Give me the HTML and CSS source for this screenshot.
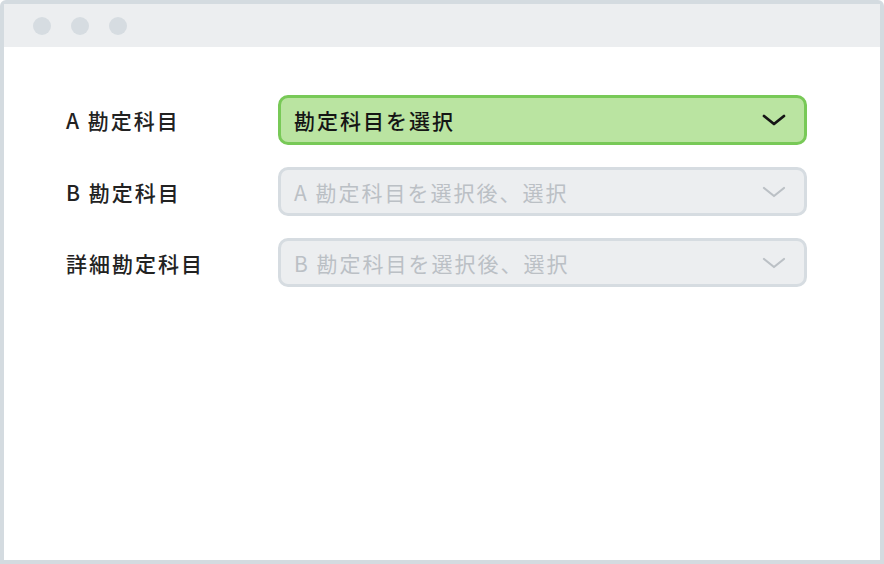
FILE: index.html
```html
<!DOCTYPE html>
<html lang="ja">
<head>
  <meta charset="UTF-8" />
  <meta name="viewport" content="width=device-width, initial-scale=1.0" />
  <title>勘定科目</title>
  <link rel="stylesheet" href="styles.css">
</head>
<body>
  <div class="window">
    <!-- タイトルバー -->
    <div class="titlebar">
      <span class="dot"></span>
      <span class="dot"></span>
      <span class="dot"></span>
    </div>

    <!-- フォーム -->
    <div class="content">
      <div class="row">
        <label class="label">A 勘定科目</label>
        <div class="select active">
          <span class="select-text">勘定科目を選択</span>
          <svg class="chevron" width="26" height="16" viewBox="0 0 26 16"><path d="M3 4 L13 12 L23 4" fill="none" stroke="currentColor" stroke-width="2.8" stroke-linecap="round" stroke-linejoin="round"/></svg>
        </div>
      </div>
      <div class="row">
        <label class="label">B 勘定科目</label>
        <div class="select disabled">
          <span class="select-text">A 勘定科目を選択後、選択</span>
          <svg class="chevron" width="26" height="16" viewBox="0 0 26 16"><path d="M3 4 L13 12 L23 4" fill="none" stroke="currentColor" stroke-width="2.2" stroke-linecap="round" stroke-linejoin="round"/></svg>
        </div>
      </div>
      <div class="row">
        <label class="label">詳細勘定科目</label>
        <div class="select disabled">
          <span class="select-text">B 勘定科目を選択後、選択</span>
          <svg class="chevron" width="26" height="16" viewBox="0 0 26 16"><path d="M3 4 L13 12 L23 4" fill="none" stroke="currentColor" stroke-width="2.2" stroke-linecap="round" stroke-linejoin="round"/></svg>
        </div>
      </div>
    </div>
  </div>
</body>
</html>
```

FILE: styles.css
```css
* {
  box-sizing: border-box;
}

body {
  margin: 0;
  background-color: #fff;
  font-family: "Noto Sans CJK JP", "Noto Sans", sans-serif;
}

.window {
  width: 884px;
  height: 564px;
  border: 4px solid #d4dbe0;
  border-radius: 6px 6px 0 0;
  display: flex;
  flex-direction: column;
  background-color: #fff;
}

.titlebar {
  height: 43px;
  background-color: #eceef0;
  display: flex;
  align-items: center;
  gap: 20px;
  padding-left: 29px;
}

.dot {
  width: 18px;
  height: 18px;
  border-radius: 50%;
  background-color: #d6dce1;
}

.content {
  padding: 48px 0 0 62px;
  display: flex;
  flex-direction: column;
  gap: 22px;
}

.row {
  display: flex;
  align-items: center;
}

.label {
  width: 212px;
  font-size: 21px;
  font-weight: 500;
  color: #222;
  letter-spacing: 2px;
}

.select {
  width: 529px;
  height: 50px;
  border-radius: 10px;
  display: flex;
  align-items: center;
  justify-content: space-between;
  padding: 0 17px 0 13px;
  font-size: 21px;
}

.select.active {
  background-color: #bae4a1;
  border: 3px solid #78c957;
  color: #151515;
  font-weight: 500;
}

.select.disabled {
  background-color: #eceef0;
  border: 3px solid #d6dce1;
  color: #bbc0c5;
  height: 49px;
}

.select-text {
  letter-spacing: 2px;
}

.chevron {
  display: block;
}
```
